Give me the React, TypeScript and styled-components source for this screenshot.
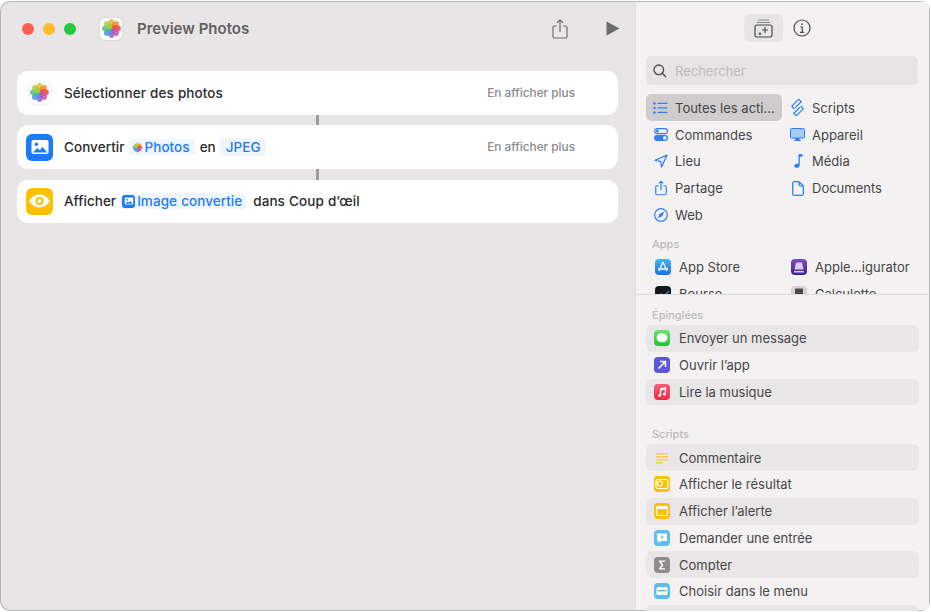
import React from "react";
import styled, { createGlobalStyle } from "styled-components";

const GlobalStyle = createGlobalStyle`
  html, body { margin: 0; padding: 0; background: #ffffff; }
  body { font-family: Inter, "Noto Sans", "Liberation Sans", sans-serif; }
  * { box-sizing: border-box; }
`;

const Page = styled.div`
  width: 931px;
  height: 612px;
  padding: 1px 1px 1px 0;
  background: #ffffff;
  overflow: hidden;
`;

const Window = styled.div`
  width: 100%;
  height: 100%;
  display: flex;
  border-radius: 10px;
  overflow: hidden;
  box-shadow: inset 0 0 0 1px #b9b8b8;
  background: #e8e5e6;
`;

const Main = styled.div`
  width: 635px;
  flex: none;
  display: flex;
  flex-direction: column;
  padding: 0 17px;
`;

const TitleBar = styled.div`
  height: 70px;
  flex: none;
  display: flex;
  align-items: center;
  padding: 0 0 15px 5px;
`;

const Lights = styled.div`
  display: flex;
  gap: 9px;
  margin-right: 24px;
`;

const Light = styled.span<{ $color: string }>`
  width: 12px;
  height: 12px;
  border-radius: 50%;
  background: ${(p) => p.$color};
`;

const AppBadge = styled.span`
  width: 22px;
  height: 22px;
  flex: none;
  display: inline-flex;
  align-items: center;
  justify-content: center;
  background: #ffffff;
  border-radius: 5px;
  box-shadow: 0 0 2px rgba(0, 0, 0, 0.2);
`;

const Title = styled.div`
  margin-left: 15px;
  font-size: 15px;
  font-weight: 600;
  color: #636162;
  flex: 1;
`;

const TitleIcon = styled.button`
  border: 0;
  background: none;
  padding: 0;
  display: flex;
  color: #6e6d6e;
`;

const TitleActions = styled.div`
  display: flex;
  align-items: center;
  gap: 38px;
  margin-right: -2px;
`;

const Flow = styled.div`
  display: flex;
  flex-direction: column;
  align-items: stretch;
  width: 601px;
`;

const Connector = styled.div`
  width: 3px;
  height: 10.75px;
  margin-left: 299px;
  background: #9c9a9b;
`;

const Card = styled.div`
  height: 43.5px;
  background: #ffffff;
  border-radius: 11px;
  display: flex;
  align-items: center;
  padding: 0 43px 0 9px;
  font-size: 13.5px;
  letter-spacing: 0.05px;
  word-spacing: 0.5px;
  font-weight: 500;
  color: #2b2a2b;
`;

const CardIcon = styled.span<{ $bg: string }>`
  width: 27px;
  height: 27px;
  flex: none;
  border-radius: 6px;
  background: ${(p) => p.$bg};
  display: flex;
  align-items: center;
  justify-content: center;
  margin-right: 11px;
`;

const CardPhotoSlot = styled.span`
  width: 27px;
  flex: none;
  display: flex;
  justify-content: center;
  margin-right: 11px;
`;

const Token = styled.span<{ $pad: string; $space: string; $height?: number }>`
  display: inline-flex;
  align-items: center;
  gap: 2px;
  height: ${(p) => p.$height ?? 16}px;
  margin: ${(p) => p.$space};
  padding: ${(p) => p.$pad};
  border-radius: 4px;
  background: #eff5fd;
  color: #1e7bf2;
`;

const MiniImage = styled.span`
  width: 13px;
  height: 13px;
  border-radius: 3px;
  background: #1a7cf4;
  display: inline-flex;
  align-items: center;
  justify-content: center;
`;

const More = styled.span`
  margin-left: auto;
  font-size: 11.8px;
  letter-spacing: 0;
  word-spacing: 0;
  font-weight: 500;
  color: #8a898a;
`;

const Side = styled.div`
  flex: 1;
  min-width: 0;
  display: flex;
  flex-direction: column;
  background: #f3f1f2;
  border-left: 1px solid #dfdddd;
  box-shadow: inset -1px -1px 0 #b9b8b8, inset 0 1px 0 #b9b8b8;
`;

const SideTop = styled.div`
  height: 294px;
  flex: none;
  overflow: hidden;
  border-bottom: 1px solid #dedcdc;
  padding: 0 12px 0 10px;
`;

const Tabs = styled.div`
  height: 55px;
  display: flex;
  align-items: flex-start;
  padding: 13px 0 0 98px;
  gap: 10px;
`;

const TabButton = styled.button<{ $active?: boolean }>`
  width: ${(p) => (p.$active ? "39px" : "18px")};
  height: 28px;
  border: 0;
  padding: 0;
  border-radius: 6px;
  background: ${(p) => (p.$active ? "#e7e4e5" : "transparent")};
  display: flex;
  align-items: center;
  justify-content: center;
  color: #4b4a4b;
`;

const SearchBox = styled.div`
  height: 29px;
  width: 272px;
  border-radius: 5px;
  background: #e6e3e4;
  display: flex;
  align-items: center;
  gap: 8px;
  padding-left: 7px;
  font-size: 13px;
  color: #bdbbbc;
`;

const CategoryGrid = styled.div`
  margin-top: 9.25px;
  display: grid;
  grid-template-columns: 136px 1fr;
  grid-auto-flow: column;
  grid-template-rows: repeat(5, 26.75px);
`;

const Category = styled.div<{ $active?: boolean; $second?: boolean }>`
  display: flex;
  align-items: center;
  height: 27px;
  border-radius: 5px;
  padding-left: ${(p) => (p.$second ? "8px" : "7px")};
  gap: 7px;
  font-size: 13px;
  color: #474647;
  background: ${(p) => (p.$active ? "#cfcccd" : "transparent")};
  white-space: nowrap;
`;

const CategoryIcon = styled.span`
  width: 15px;
  height: 16px;
  flex: none;
  display: flex;
  align-items: center;
  justify-content: center;
  color: #2f80f6;
`;

const SectionLabel = styled.div`
  font-size: 11px;
  font-weight: 500;
  color: #bcbabb;
  padding-left: 6px;
`;

const AppsLabel = styled(SectionLabel)`
  margin-top: 8.75px;
  height: 15px;
  line-height: 15px;
`;

const AppGrid = styled.div`
  margin-top: 2px;
  display: grid;
  grid-template-columns: 136px 1fr;
  grid-auto-rows: 26.75px;
`;

const AppRow = styled.div`
  display: flex;
  align-items: center;
  gap: 8px;
  padding-left: 9px;
  font-size: 13px;
  color: #474647;
  white-space: nowrap;
`;

const SideBottom = styled.div`
  flex: 1;
  min-height: 0;
  overflow: hidden;
  padding: 13px 12px 0 10px;
`;

const ActionList = styled.div`
  margin-top: 3px;
  display: flex;
  flex-direction: column;
`;

const ScriptsLabel = styled(SectionLabel)`
  margin-top: 22px;
  height: 14px;
  line-height: 14px;
`;

const ActionRow = styled.div<{ $striped?: boolean }>`
  height: 26.75px;
  flex: none;
  display: flex;
  align-items: center;
  gap: 9px;
  padding-left: 8px;
  width: 273px;
  border-radius: 6px;
  background: ${(p) => (p.$striped ? "#e9e6e7" : "transparent")};
  font-size: 13px;
  color: #474647;
`;

const ActionIcon = styled.span<{ $bg: string }>`
  width: 16px;
  height: 16px;
  flex: none;
  border-radius: 4px;
  background: ${(p) => p.$bg};
  display: flex;
  align-items: center;
  justify-content: center;
`;

// Photos app flower, eight overlapping translucent petals
const PETALS = ["#f9b52c", "#f5862a", "#f0413f", "#d9509f", "#8a64c8", "#4f93e4", "#4dbd7f", "#a2cf3e"];

const PhotosFlower = ({ size }: { size: number }) => (
  <svg width={size} height={size} viewBox="0 0 24 24">
    {PETALS.map((c, i) => (
      <ellipse
        key={c}
        cx="12"
        cy="6.6"
        rx="3.6"
        ry="5.4"
        fill={c}
        fillOpacity="0.85"
        transform={`rotate(${i * 45} 12 12)`}
      />
    ))}
  </svg>
);

const ImageGlyph = ({ size, color }: { size: number; color: string }) => (
  <svg width={size} height={size} viewBox="0 0 20 20">
    <rect x="1.5" y="3" width="17" height="14" rx="1.8" fill="#fff" />
    <circle cx="6.4" cy="7.3" r="1.7" fill={color} />
    <path d="M2.8 15.5 7.3 11l2.4 2.2 3-3.2 4.5 5.5z" fill={color} />
  </svg>
);

const EyeGlyph = () => (
  <svg width="21" height="14" viewBox="0 0 21 14">
    <path d="M10.5 0.5C16 0.5 19.6 4.6 20.6 7 19.6 9.4 16 13.5 10.5 13.5S1.4 9.4 0.4 7C1.4 4.6 5 0.5 10.5 0.5z" fill="#fff" />
    <circle cx="10.5" cy="7" r="4" fill="#fdc100" />
    <circle cx="10.5" cy="7" r="1.9" fill="#fff" />
  </svg>
);

const ShareGlyph = ({ w, h, stroke }: { w: number; h: number; stroke: number }) => (
  <svg width={w} height={h} viewBox="0 0 16 20" fill="none" stroke="currentColor" strokeWidth={stroke}>
    <path d="M5 7H2.6C1.7 7 1 7.7 1 8.6v8.8c0 .9.7 1.6 1.6 1.6h10.800c.9 0 1.600-.7 1.600-1.600V8.600C15 7.700 14.300 7 13.400 7H11" />
    <path d="M8 13V1.200M5 3.800 8 1l3 2.800" />
  </svg>
);

const catStroke = { fill: "none", stroke: "currentColor", strokeWidth: 1.3 };

const categoryIcons: Record<string, React.ReactNode> = {
  list: (
    <svg width="15" height="12" viewBox="0 0 15 12" fill="currentColor">
      <circle cx="1.500" cy="1.500" r="1.200" />
      <circle cx="1.500" cy="6" r="1.200" />
      <circle cx="1.500" cy="10.500" r="1.200" />
      <rect x="4.500" y="0.800" width="10" height="1.300" rx="0.600" />
      <rect x="4.500" y="5.300" width="10" height="1.300" rx="0.600" />
      <rect x="4.500" y="9.800" width="10" height="1.300" rx="0.600" />
    </svg>
  ),
  toggles: (
    <svg width="14" height="13" viewBox="0 0 14 13">
      <rect x="0.600" y="0.600" width="12.800" height="5" rx="2.500" fill="none" stroke="currentColor" strokeWidth="1.200" />
      <circle cx="3.300" cy="3.100" r="1.500" fill="currentColor" />
      <rect y="7" width="14" height="6" rx="3" fill="currentColor" />
      <circle cx="10.800" cy="10" r="1.800" fill="#fff" />
    </svg>
  ),
  location: (
    <svg width="14" height="14" viewBox="0 0 14 14" {...catStroke} strokeLinejoin="round">
      <path d="M13 1 1 6.400l5.600.9.900 5.700z" />
    </svg>
  ),
  share: <ShareGlyph w={12} h={16} stroke={1.6} />,
  compass: (
    <svg width="14" height="14" viewBox="0 0 14 14">
      <circle cx="7" cy="7" r="6.300" fill="none" stroke="currentColor" strokeWidth="1.200" />
      <path d="M10.300 3.700 8.200 8.200 3.700 10.300 5.800 5.800z" fill="currentColor" />
    </svg>
  ),
  scripts: (
    <svg width="13" height="17" viewBox="0 0 13 17" fill="none" stroke="currentColor" strokeWidth="1.300" strokeLinejoin="round">
      <path d="M7 .9 1.300 6.600a1 1 0 0 0 0 1.400l2 2M7 .9a1 1 0 0 1 1.400 0l1.800 1.800L4 8.900" />
      <path d="M6 16.100l5.700-5.700a1 1 0 0 0 0-1.400l-2-2M6 16.100a1 1 0 0 1-1.400 0l-1.800-1.800L9 8.100" />
    </svg>
  ),
  monitor: (
    <svg width="15" height="13" viewBox="0 0 15 13">
      <rect x="0.500" y="0.500" width="14" height="9.500" rx="1" fill="#a9c9f8" stroke="currentColor" strokeWidth="1" />
      <path d="M5.500 10h4v1.800h1.300V13H4.200v-1.200h1.300z" fill="currentColor" />
    </svg>
  ),
  music: (
    <svg width="10" height="14" viewBox="0 0 10 14" fill="currentColor">
      <path d="M5.500 0.300 9.500 0v2.600l-2.700.3v8.300c0 1.500-1.300 2.600-3.200 2.600-1.300 0-2.300-.7-2.300-1.800 0-1.300 1.200-2 2.700-2.200l1.500-.2z" />
    </svg>
  ),
  file: (
    <svg width="12" height="15" viewBox="0 0 12 15" {...catStroke} strokeLinejoin="round">
      <path d="M7 .7H2.200C1.300.7.700 1.300.700 2.200v10.600c0 .9.600 1.500 1.500 1.500h7.600c.9 0 1.500-.6 1.500-1.500V4.900zM7 .7V3.400c0 .9.600 1.500 1.500 1.500h2.800" />
    </svg>
  ),
};

const leftCategories = [
  { key: "list", label: "Toutes les acti…", active: true },
  { key: "toggles", label: "Commandes" },
  { key: "location", label: "Lieu" },
  { key: "share", label: "Partage" },
  { key: "compass", label: "Web" },
];

const rightCategories = [
  { key: "scripts", label: "Scripts" },
  { key: "monitor", label: "Appareil" },
  { key: "music", label: "Média" },
  { key: "file", label: "Documents" },
];

const g = { fill: "#fff" };

const apps = [
  {
    label: "App Store",
    bg: "linear-gradient(#3fb5f8, #1a6ff0)",
    icon: <path d="M8 3 4 12M8 3l4 9M3 10h10" fill="none" stroke="#fff" strokeWidth="1.300" />,
  },
  {
    label: "Apple…igurator",
    bg: "linear-gradient(#7d4fc8, #3c1f8c)",
    icon: <path d="M5 3.500h6l1.500 7h-9zM3 12h10v1.500H3z" fill="#d9ccf5" />,
  },
  {
    label: "Bourse",
    bg: "#15171c",
    icon: <path d="M2 11 6 8l3 2 5-5" fill="none" stroke="#3a8ee8" strokeWidth="1.200" />,
  },
  {
    label: "Calculette",
    bg: "#d4d2d2",
    icon: <rect x="4" y="2.500" width="8" height="11" rx="1" fill="#4a4849" />,
  },
];

const pinned = [
  {
    label: "Envoyer un message",
    bg: "linear-gradient(#6fe56b, #23c03a)",
    icon: <ellipse cx="8" cy="7.700" rx="5.500" ry="4.500" {...g} />,
  },
  {
    label: "Ouvrir l’app",
    bg: "#5b57d6",
    icon: <path d="M4.500 11.500 11 5M6 4.500h5.500V10" fill="none" stroke="#fff" strokeWidth="1.500" />,
  },
  {
    label: "Lire la musique",
    bg: "linear-gradient(#fb5c74, #f02a44)",
    icon: <path d="M6 4.300 12 3v7.200a1.600 1.300 0 1 1-1.200-1.300V5.400L7.200 6.200v5.400A1.600 1.300 0 1 1 6 10.300z" {...g} />,
  },
];

const scripts = [
  {
    label: "Commentaire",
    bg: "transparent",
    icon: <path d="M2 3h12v1.400H2zM2 6h12v1.400H2zM2 9h12v1.400H2zM2 12h7v1.400H2z" fill="#f9cf50" />,
  },
  {
    label: "Afficher le résultat",
    bg: "#fdc100",
    icon: (
      <>
        <rect x="2" y="3.500" width="12" height="9" rx="2" fill="none" stroke="#fff" strokeWidth="1.200" />
        <circle cx="6" cy="7.500" r="2.500" fill="#fdc100" stroke="#fff" strokeWidth="1.200" />
      </>
    ),
  },
  {
    label: "Afficher l’alerte",
    bg: "#fdc100",
    icon: (
      <>
        <rect x="2.500" y="3.500" width="11" height="9" rx="1.500" fill="#fdc100" stroke="#fff" strokeWidth="1.200" />
        <rect x="2.500" y="3.500" width="11" height="2.500" {...g} />
      </>
    ),
  },
  {
    label: "Demander une entrée",
    bg: "#5cbdf2",
    icon: (
      <>
        <path d="M3 3.500h10v7.500H7l-2.500 2.200V11H3z" {...g} />
        <path d="M8 5.300v3.500M6.300 7h3.400" stroke="#5cbdf2" strokeWidth="1" />
      </>
    ),
  },
  {
    label: "Compter",
    bg: "#8e8c8d",
    icon: <path d="M5 3.500h6v1.200H7l2.400 3.300L7 11.300h4v1.200H5v-1l2.600-3.500L5 4.500z" {...g} />,
  },
  {
    label: "Choisir dans le menu",
    bg: "#5cbdf2",
    icon: (
      <>
        <rect x="2.500" y="4" width="11" height="8" rx="1.500" {...g} />
        <rect x="4" y="7" width="8" height="1.500" fill="#5cbdf2" />
      </>
    ),
  },
  { label: "", bg: "transparent", icon: null },
];

const App = () => {
  return (
    <Page>
      <GlobalStyle />
      <Window>
        <Main>
          <TitleBar>
            <Lights>
              <Light $color="#fd5f57" />
              <Light $color="#fdbb2e" />
              <Light $color="#27c83f" />
            </Lights>
            <AppBadge>
              <PhotosFlower size={21} />
            </AppBadge>
            <Title>Preview Photos</Title>
            <TitleActions>
              <TitleIcon aria-label="Partager">
                <ShareGlyph w={16} h={20} stroke={1.2} />
              </TitleIcon>
              <TitleIcon aria-label="Exécuter">
                <svg width="14" height="15" viewBox="0 0 14 15" fill="currentColor">
                  <path d="M0.500 0.500 13.500 7.500 0.500 14.500z" />
                </svg>
              </TitleIcon>
            </TitleActions>
          </TitleBar>
          <Flow>
            <Card>
              <CardPhotoSlot>
                <AppBadge>
                  <PhotosFlower size={21} />
                </AppBadge>
              </CardPhotoSlot>
              Sélectionner des photos
              <More>En afficher plus</More>
            </Card>
            <Connector />
            <Card>
              <CardIcon $bg="#1a7cf4">
                <ImageGlyph size={20} color="#1a7cf4" />
              </CardIcon>
              Convertir
              <Token $pad="0 5px 0 3px" $space="0 5px 0 4px">
                <PhotosFlower size={11} />
                Photos
              </Token>
              en
              <Token $pad="0 5px 0 6px" $height={18} $space="0 0 0 4px">
                JPEG
              </Token>
              <More>En afficher plus</More>
            </Card>
            <Connector />
            <Card>
              <CardIcon $bg="#fdc100">
                <EyeGlyph />
              </CardIcon>
              Afficher
              <Token $pad="0 4px 0 1px" $space="0 7px 0 5px">
                <MiniImage>
                  <ImageGlyph size={10} color="#1a7cf4" />
                </MiniImage>
                Image convertie
              </Token>
              dans Coup d’œil
            </Card>
          </Flow>
        </Main>
        <Side>
          <SideTop>
            <Tabs>
              <TabButton $active aria-label="Actions">
                <svg width="19" height="19" viewBox="0 0 19 19" fill="none" stroke="currentColor" strokeWidth="1.200">
                  <path d="M4 1h11M2.800 3.500h13.400" stroke="#8a898a" />
                  <rect x="1" y="6" width="17" height="12" rx="1.800" />
                  <path d="M11 8v6M8 11h6M6 13.500v2.500M4.800 14.800h2.400" />
                </svg>
              </TabButton>
              <TabButton aria-label="Informations">
                <svg width="18" height="18" viewBox="0 0 18 18" fill="none" stroke="currentColor" strokeWidth="1.200">
                  <circle cx="9" cy="9" r="8" />
                  <circle cx="9" cy="5.200" r="0.900" fill="currentColor" stroke="none" />
                  <path d="M7.300 8h2v5M7 13.300h4.200" />
                </svg>
              </TabButton>
            </Tabs>
            <SearchBox>
              <svg width="14" height="14" viewBox="0 0 14 14" fill="none" stroke="#4b4a4b" strokeWidth="1.300">
                <circle cx="5.800" cy="5.800" r="4.800" />
                <path d="M9.300 9.300 13 13" />
              </svg>
              Rechercher
            </SearchBox>
            <CategoryGrid>
              {leftCategories.map((c) => (
                <Category key={c.key} $active={c.active}>
                  <CategoryIcon>{categoryIcons[c.key]}</CategoryIcon>
                  {c.label}
                </Category>
              ))}
              {rightCategories.map((c) => (
                <Category key={c.key} $second>
                  <CategoryIcon>{categoryIcons[c.key]}</CategoryIcon>
                  {c.label}
                </Category>
              ))}
            </CategoryGrid>
            <AppsLabel>Apps</AppsLabel>
            <AppGrid>
              {apps.map((a) => (
                <AppRow key={a.label}>
                  <ActionIcon $bg={a.bg}>
                    <svg width="16" height="16" viewBox="0 0 16 16">
                      {a.icon}
                    </svg>
                  </ActionIcon>
                  {a.label}
                </AppRow>
              ))}
            </AppGrid>
          </SideTop>
          <SideBottom>
            <SectionLabel>Épinglées</SectionLabel>
            <ActionList>
              {pinned.map((a, i) => (
                <ActionRow key={a.label} $striped={i % 2 === 0}>
                  <ActionIcon $bg={a.bg}>
                    <svg width="16" height="16" viewBox="0 0 16 16">
                      {a.icon}
                    </svg>
                  </ActionIcon>
                  {a.label}
                </ActionRow>
              ))}
            </ActionList>
            <ScriptsLabel>Scripts</ScriptsLabel>
            <ActionList>
              {scripts.map((a, i) => (
                <ActionRow key={a.label || "next"} $striped={i % 2 === 0}>
                  {a.icon && (
                    <ActionIcon $bg={a.bg}>
                      <svg width="16" height="16" viewBox="0 0 16 16">
                        {a.icon}
                      </svg>
                    </ActionIcon>
                  )}
                  {a.label}
                </ActionRow>
              ))}
            </ActionList>
          </SideBottom>
        </Side>
      </Window>
    </Page>
  );
};

export default App;
